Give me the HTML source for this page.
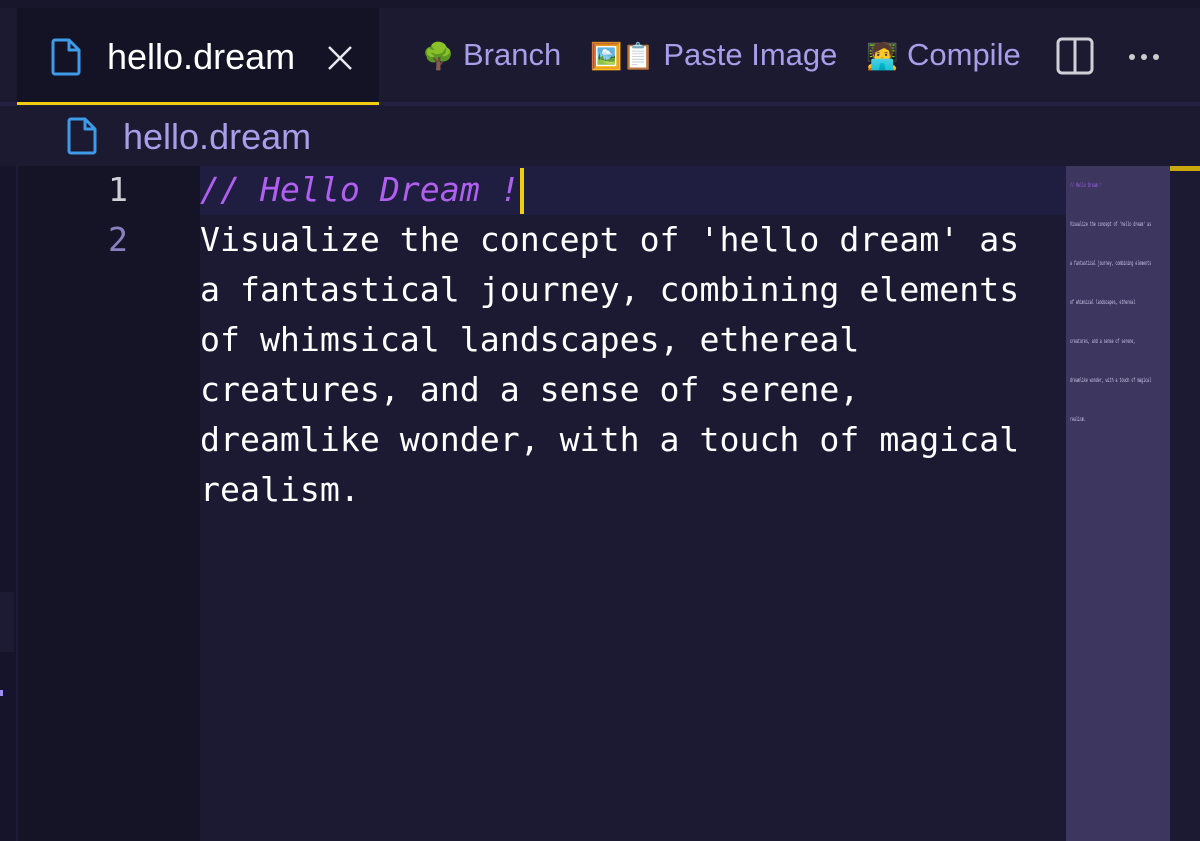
<!DOCTYPE html>
<html><head><style>
*{margin:0;padding:0;box-sizing:border-box}
body{width:1200px;height:841px;overflow:hidden;background:#1c1a33;position:relative;font-family:"Liberation Sans",sans-serif}
.abs{position:absolute}
.mono{font-family:"DejaVu Sans Mono","Liberation Mono",monospace;font-size:33.2px;white-space:pre;letter-spacing:0}
.btn{position:absolute;top:37px;font-size:31px;color:#a99ce8;white-space:nowrap}
.emo{font-size:26px}
.mm{position:absolute;left:1070px;font-family:"Liberation Mono",monospace;font-size:6px;color:#cfc8e8;white-space:pre;transform:scale(0.55,1);transform-origin:0 0}
</style></head><body>
<div class="abs" style="left:0;top:0;width:1200px;height:8px;background:#17162b"></div>
<div class="abs" style="left:0;top:8px;width:1200px;height:97px;background:#1b1a31"></div>
<div class="abs" style="left:0;top:102px;width:1200px;height:4px;background:#22203e"></div>
<div class="abs" style="left:17px;top:8px;width:362px;height:94px;background:#141325"></div>
<div class="abs" style="left:17px;top:102px;width:362px;height:3px;background:#f2cc0f"></div>
<svg class="abs" style="left:50px;top:38px" width="34" height="38" viewBox="0 0 34 38"><path d="M5 2h14l10 10v22a2 2 0 0 1-2 2H5a2 2 0 0 1-2-2V4a2 2 0 0 1 2-2z M19 2v10h10" fill="none" stroke="#3d9be8" stroke-width="3" stroke-linejoin="round"/></svg>
<div class="abs" style="left:107px;top:36px;font-size:36px;color:#fff">hello.dream</div>
<svg class="abs" style="left:327px;top:45px" width="26" height="26"><path d="M2 2L24 24M24 2L2 24" stroke="#e8e8f0" stroke-width="2.5"/></svg>
<div class="btn" style="left:422px"><span class="emo">🌳</span> Branch</div>
<div class="btn" style="left:590px"><span class="emo">🖼️📋</span> Paste Image</div>
<div class="btn" style="left:866px"><span class="emo">🧑‍💻</span> Compile</div>
<svg class="abs" style="left:1056px;top:37px" width="38" height="38"><rect x="2" y="2" width="34" height="34" rx="4" fill="none" stroke="#d0d0d8" stroke-width="3"/><path d="M19 2v34" stroke="#d0d0d8" stroke-width="3"/></svg>
<div class="abs" style="left:1129px;top:54px;width:6px;height:6px;border-radius:3px;background:#ccc;box-shadow:12px 0 #ccc,24px 0 #ccc"></div>
<div class="abs" style="left:0;top:106px;width:1200px;height:60px;background:#1b1a31"></div>
<svg class="abs" style="left:66px;top:117px" width="34" height="38" viewBox="0 0 34 38"><path d="M5 2h14l10 10v22a2 2 0 0 1-2 2H5a2 2 0 0 1-2-2V4a2 2 0 0 1 2-2z M19 2v10h10" fill="none" stroke="#3d9be8" stroke-width="3" stroke-linejoin="round"/></svg>
<div class="abs" style="left:123px;top:116px;font-size:36px;color:#a99ce8">hello.dream</div>
<div class="abs" style="left:0;top:166px;width:16px;height:675px;background:#15142a"></div>
<div class="abs" style="left:0;top:592px;width:14px;height:60px;background:#1c1b33"></div>
<div class="abs" style="left:0;top:690px;width:3px;height:6px;background:#9b8ff0"></div>
<div class="abs" style="left:16px;top:166px;width:2px;height:675px;background:#1d1b34"></div>
<div class="abs" style="left:18px;top:166px;width:182px;height:675px;background:#151427"></div>
<div class="abs" style="left:200px;top:166px;width:866px;height:49px;background:#201e40"></div>
<div class="abs mono" style="left:108px;top:170px;color:#cfcfd6">1</div>
<div class="abs mono" style="left:108px;top:220px;color:#8a80c0">2</div>
<div class="abs mono" style="left:200px;top:170px;color:#b05ff0;font-style:italic">// Hello Dream !</div>
<div class="abs" style="left:520px;top:168px;width:4px;height:46px;background:#f2cc0f"></div>
<div class="abs mono" style="left:200px;top:215px;color:#fff;line-height:50px">Visualize the concept of 'hello dream' as
a fantastical journey, combining elements
of whimsical landscapes, ethereal
creatures, and a sense of serene,
dreamlike wonder, with a touch of magical
realism.</div>
<div class="abs" style="left:1066px;top:166px;width:104px;height:675px;background:#3d3760"></div>
<div class="abs" style="left:1170px;top:166px;width:30px;height:5px;background:#c8a80c"></div>
<div class="mm" style="top:182px;color:#a060f0">// Hello Dream !</div>
<div class="mm" style="top:221px">Visualize the concept of 'hello dream' as</div>
<div class="mm" style="top:260px">a fantastical journey, combining elements</div>
<div class="mm" style="top:299px">of whimsical landscapes, ethereal</div>
<div class="mm" style="top:338px">creatures, and a sense of serene,</div>
<div class="mm" style="top:377px">dreamlike wonder, with a touch of magical</div>
<div class="mm" style="top:416px">realism.</div>
</body></html>
